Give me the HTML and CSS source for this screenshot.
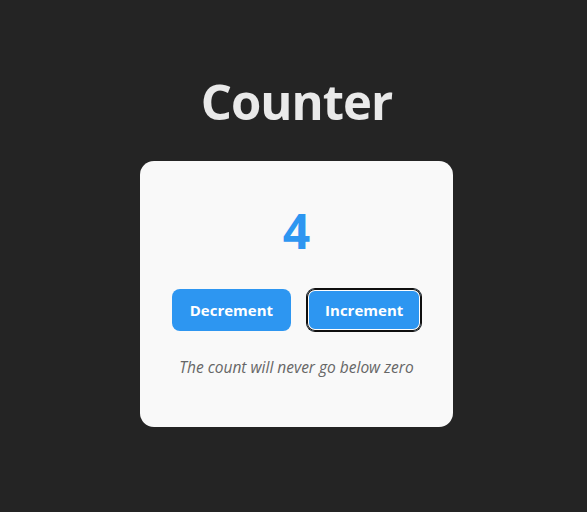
FILE: index.html
```html
<!DOCTYPE html>
<html lang="en">
<head>
<meta charset="utf-8">
<title>Counter</title>
<link rel="stylesheet" href="styles.css">
</head>
<body>
  <main class="app">
    <h1 class="title">Counter</h1>
    <section class="card">
      <div class="count">4</div>
      <div class="actions">
        <button class="btn">Decrement</button>
        <button class="btn btn-focused">Increment</button>
      </div>
      <p class="note">The count will never go below zero</p>
    </section>
  </main>
</body>
</html>
```

FILE: styles.css
```css
html, body {
  margin: 0;
  padding: 0;
}

body {
  background: #242424;
  font-family: "Open Sans", "Noto Sans", sans-serif;
  min-height: 512px;
}

.app {
  display: flex;
  flex-direction: column;
  align-items: center;
  padding-top: 73px;
  padding-left: 6px;
}

.title {
  margin: 0 0 32px;
  font-size: 49px;
  line-height: 56px;
  letter-spacing: -1px;
  font-weight: 700;
  color: #e9e9e9;
}

.card {
  box-sizing: border-box;
  width: 313px;
  padding: 32px 32px 32px;
  background: #f9f9f9;
  border-radius: 14px;
  display: flex;
  flex-direction: column;
  align-items: center;
}

.count {
  font-size: 48px;
  line-height: 75px;
  font-weight: 700;
  color: #2d96f1;
  margin-bottom: 21px;
}

.actions {
  display: flex;
  gap: 16px;
}

.btn {
  font-family: inherit;
  font-size: 15px;
  font-weight: 700;
  line-height: 24px;
  padding: 9px 18px;
  border: none;
  border-radius: 8px;
  background: #2d96f1;
  color: #ffffff;
}

.btn-focused {
  box-shadow: 0 0 0 1px #101010, inset 0 0 0 1px #101010, inset 0 0 0 2px #ffffff;
}

.note {
  margin: 24px 0 16px;
  font-size: 15.5px;
  line-height: 24px;
  font-style: italic;
  color: #666666;
}
```
